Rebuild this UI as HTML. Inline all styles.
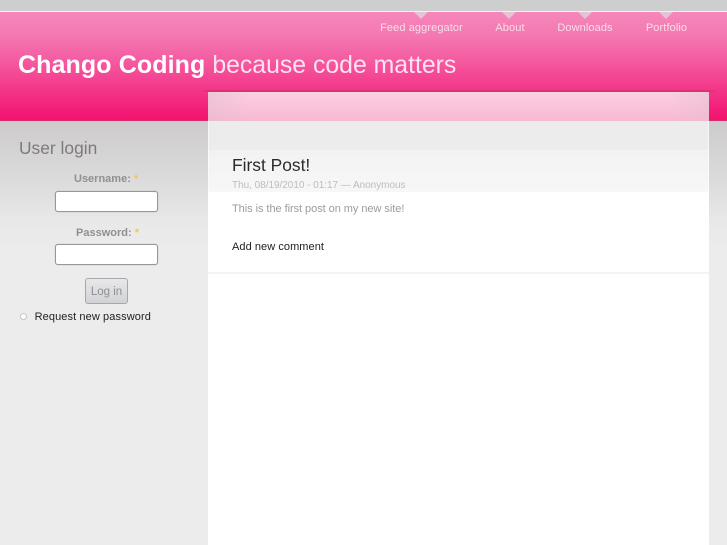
<!DOCTYPE html>
<html><head><meta charset="utf-8"><style>
html,body{margin:0;padding:0}
body{width:727px;height:545px;position:relative;overflow:hidden;background:#ececec;font-family:"Liberation Sans",sans-serif}
div,a,span{position:absolute;white-space:nowrap}
.tri{width:0;height:0;top:12px;border-left:7px solid transparent;border-right:7px solid transparent;border-top:7px solid #e6c3d3}
.nav{top:21px;font-size:11px;line-height:14px;color:#fbdcea;transform:translateX(-50%);letter-spacing:.1px;filter:blur(.25px)}
.t{filter:blur(.25px)}
input{position:absolute;box-sizing:border-box;background:#fff;border:1px solid #989696;border-radius:3px;outline:0;margin:0;box-shadow:0 0 1px #aaa}
</style></head><body>
<div style="left:0;top:0;width:727px;height:11px;background:#cfcece"></div>
<div style="left:0;top:11px;width:727px;height:1px;background:#f2f0f1"></div>
<div style="left:0;top:12px;width:727px;height:109px;background:linear-gradient(#f587bb 0,#f478b1 22%,#f5569e 48%,#f4378a 70%,#f2116f 100%)"></div>
<div style="left:0;top:120px;width:727px;height:1px;background:#dc2a6b"></div>
<div style="left:0;top:121px;width:727px;height:424px;background:linear-gradient(#cdcbcc 0,#d9d8d8 49px,#e2e1e1 79px,#e8e8e8 99px,#ececec 129px,#ececec 100%)"></div>
<div class="tri" style="left:414px"></div><div class="tri" style="left:502px"></div><div class="tri" style="left:578px"></div><div class="tri" style="left:659px"></div>
<span class="nav" style="left:421.5px">Feed aggregator</span>
<span class="nav" style="left:510px">About</span>
<span class="nav" style="left:585px">Downloads</span>
<span class="nav" style="left:666.5px">Portfolio</span>
<div class="t" style="left:18px;top:49px;font-size:25px;line-height:32px;color:#fff"><b style="letter-spacing:.1px">Chango Coding</b> <span style="position:static;color:#fde3ef;font-size:24.8px">because code matters</span></div>
<div style="left:200px;top:90px;width:517px;height:2px;background:linear-gradient(90deg,transparent,#d9336f 8px,#d9336f 509px,transparent)"></div>
<div style="left:208px;top:92px;width:501px;height:29px;background:linear-gradient(#fdcfe2,#f8b9d3);box-shadow:inset 0 1px 0 #f6d3e2"></div>
<div style="left:208px;top:92px;width:40px;height:29px;background:linear-gradient(100deg,rgba(225,190,205,.5),rgba(240,190,210,0))"></div>
<div style="left:669px;top:92px;width:40px;height:29px;background:linear-gradient(260deg,rgba(225,190,205,.45),rgba(240,190,210,0))"></div>
<div style="left:208px;top:121px;width:501px;height:29px;background:#ececec"></div>
<div style="left:208px;top:150px;width:501px;height:42px;background:linear-gradient(#f2f2f2,#f7f7f7)"></div>
<div style="left:208px;top:192px;width:501px;height:353px;background:#fff"></div>
<div style="left:208px;top:121px;width:1px;height:424px;background:rgba(255,255,255,.6)"></div>
<div style="left:708px;top:121px;width:1px;height:424px;background:rgba(255,255,255,.6)"></div>
<div style="left:208px;top:272px;width:501px;height:2px;background:#f3f3f3"></div>
<div class="t" style="left:19px;top:138px;font-size:17.4px;line-height:21px;color:#7d7a7b">User login</div>
<div class="t" style="left:74px;top:172px;font-size:11px;line-height:14px;font-weight:bold;color:#918f8f">Username: <span style="position:static;color:#f6c25f">*</span></div>
<input style="left:55px;top:191px;width:103px;height:21px">
<div class="t" style="left:76px;top:226px;font-size:11px;line-height:14px;font-weight:bold;color:#918f8f">Password: <span style="position:static;color:#f6c25f">*</span></div>
<input style="left:55px;top:244px;width:103px;height:21px">
<div style="left:85px;top:278px;width:41px;height:24px;border:1px solid #a8a8aa;border-radius:3px;background:linear-gradient(#e8e8ea,#d2d3d6);color:#8f8f91;font-size:11.5px;line-height:26px;text-align:center"><span class="t" style="position:static">Log in</span></div>
<div style="left:20px;top:313px;width:5px;height:5px;border:1px solid #c4c4c4;border-radius:50%;background:#fff"></div>
<div class="t" style="left:34.6px;top:310px;font-size:11px;line-height:14px;color:#222;letter-spacing:.1px">Request new password</div>
<div class="t" style="left:232px;top:155px;font-size:17.4px;line-height:21px;color:#2b2b2b">First Post!</div>
<div class="t" style="left:232px;top:179px;font-size:10px;line-height:13px;color:#bdbdbd;letter-spacing:-.03px">Thu, 08/19/2010 - 01:17 — Anonymous</div>
<div class="t" style="left:232px;top:202px;font-size:11px;line-height:14px;color:#9c9c9c;letter-spacing:-.05px">This is the first post on my new site!</div>
<div class="t" style="left:232px;top:240px;font-size:11px;line-height:14px;color:#222;letter-spacing:.06px">Add new comment</div>
</body></html>
